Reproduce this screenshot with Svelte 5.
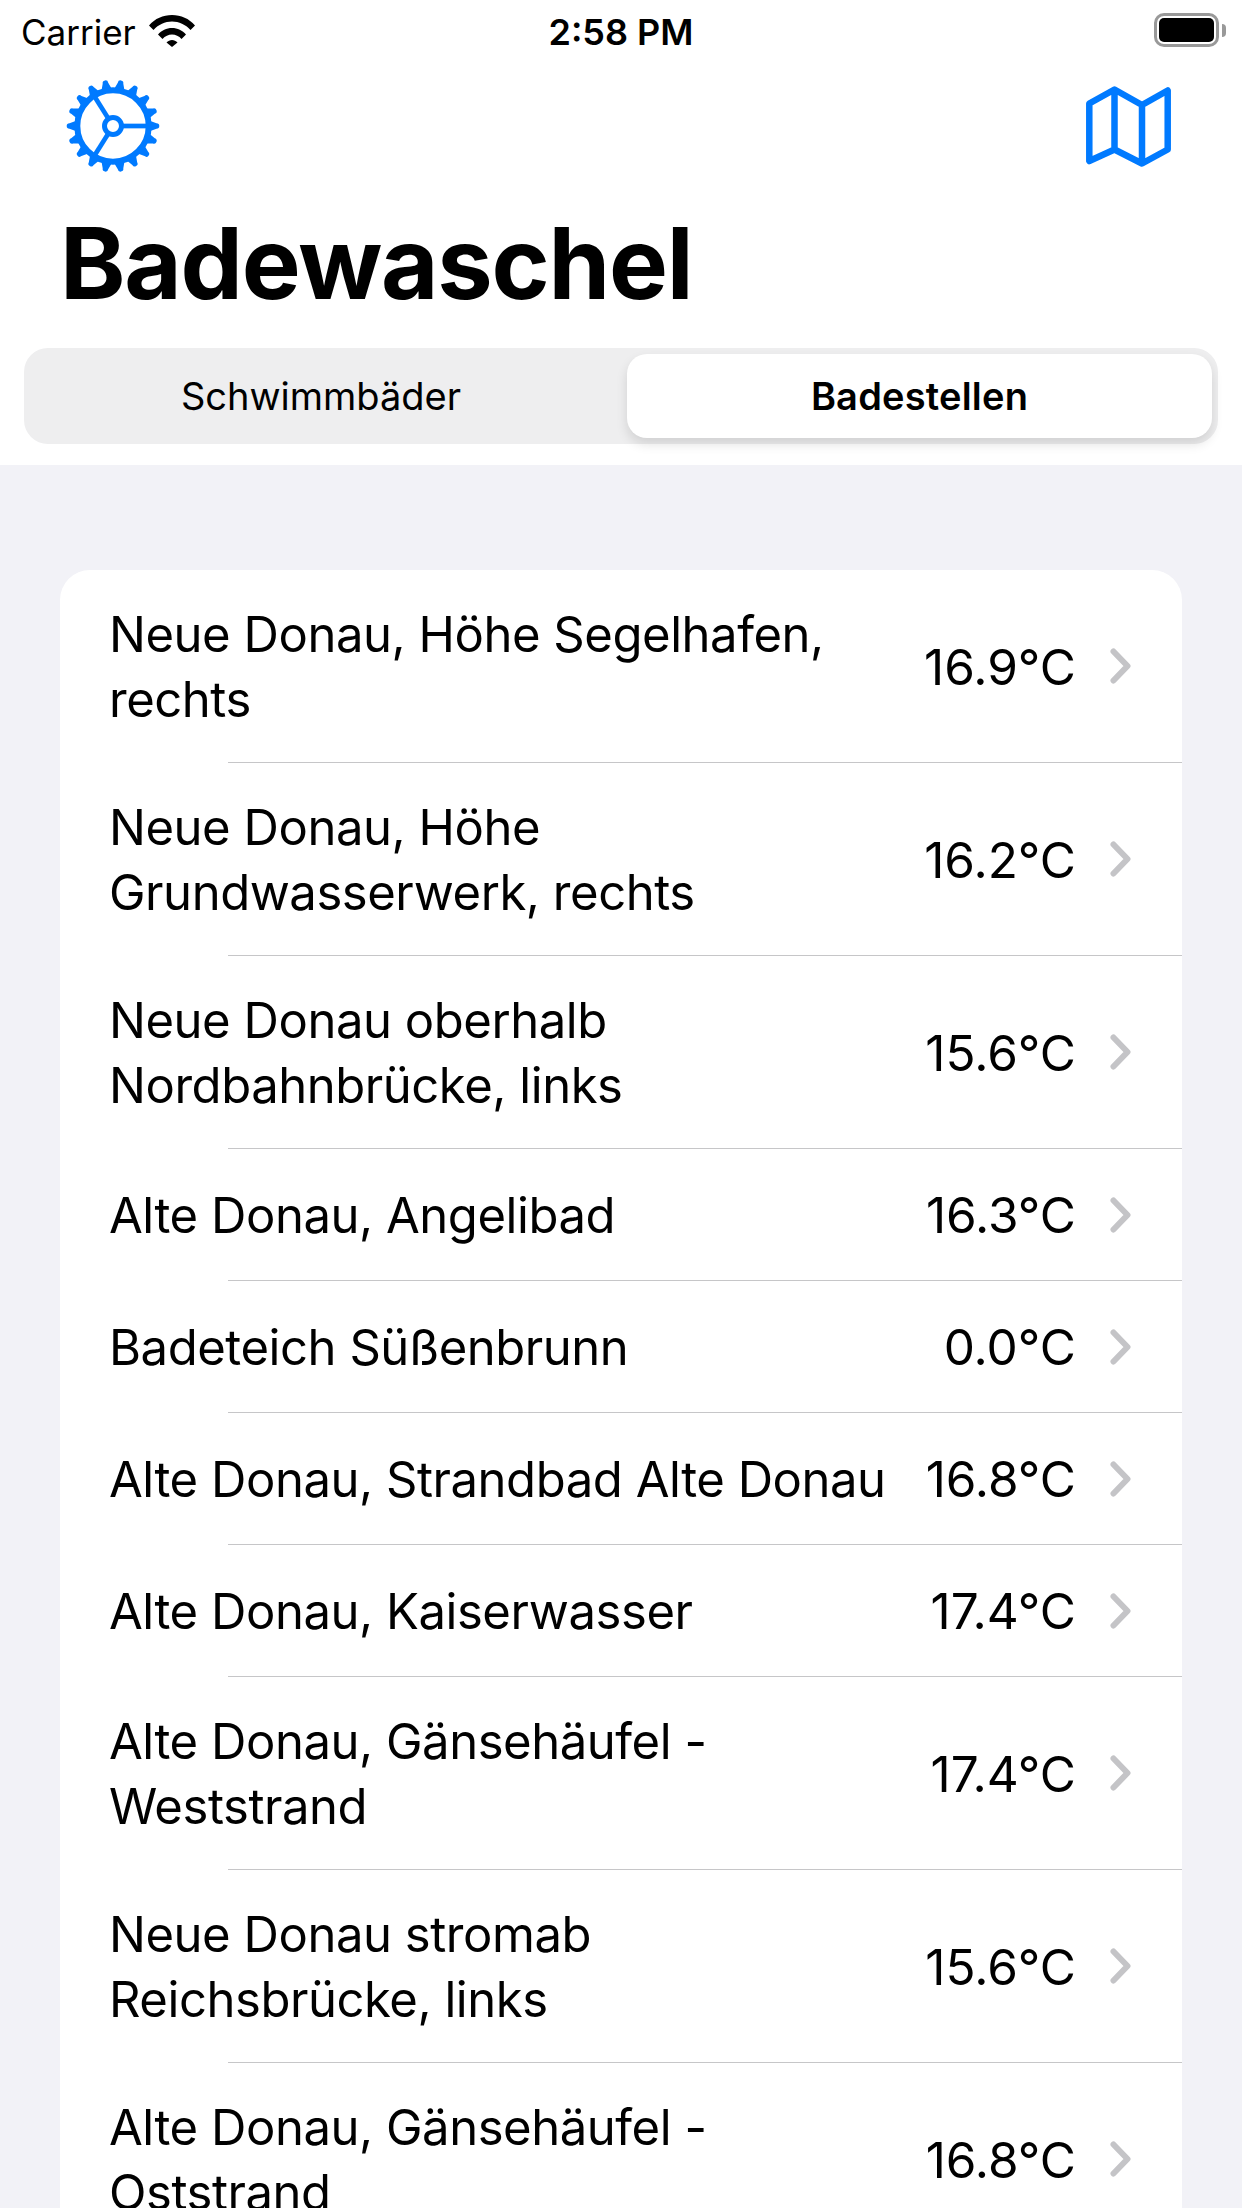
<script>
  const rows = [
    { lines: ['Neue Donau, Höhe Segelhafen,', 'rechts'], temp: '16.9°C' },
    { lines: ['Neue Donau, Höhe', 'Grundwasserwerk, rechts'], temp: '16.2°C' },
    { lines: ['Neue Donau oberhalb', 'Nordbahnbrücke, links'], temp: '15.6°C' },
    { lines: ['Alte Donau, Angelibad'], temp: '16.3°C' },
    { lines: ['Badeteich Süßenbrunn'], temp: '0.0°C' },
    { lines: ['Alte Donau, Strandbad Alte Donau'], temp: '16.8°C' },
    { lines: ['Alte Donau, Kaiserwasser'], temp: '17.4°C' },
    { lines: ['Alte Donau, Gänsehäufel -', 'Weststrand'], temp: '17.4°C' },
    { lines: ['Neue Donau stromab', 'Reichsbrücke, links'], temp: '15.6°C' },
    { lines: ['Alte Donau, Gänsehäufel -', 'Oststrand'], temp: '16.8°C' }
  ]

  // gear teeth, one every 20 degrees
  const teeth = Array.from({ length: 18 }, (_, i) => i * 20)
  const spokes = [0, 122, 238]
</script>

<div class="screen">
  <header class="top">
    <div class="status">
      <div class="status-left">
        <span class="carrier">Carrier</span>
        <svg class="wifi" width="46" height="33" viewBox="0 0 46 33">
          <path d="M0 11.5C6 4.5 14 1 23 1s17 3.500 23 10.500l-4.500 4.500C36.500 10.500 30 7.500 23 7.500S9.500 10.500 4.500 16Z" fill="#000" />
          <path d="M9 20.500C12.500 16.500 17.500 14 23 14s10.500 2.500 14 6.500l-4.500 4.500C30 22 26.500 20.500 23 20.500S16 22 13.500 25Z" fill="#000" />
          <path d="M17.500 28.500C19 27 21 26 23 26s4 1 5.500 2.500L23 33Z" fill="#000" />
        </svg>
      </div>
      <span class="time">2:58 PM</span>
      <div class="battery">
        <div class="battery-body"><div class="battery-fill"></div></div>
        <div class="battery-nub"></div>
      </div>
    </div>

    <div class="nav">
      <svg class="gear" width="94" height="94" viewBox="-47 -47 94 94">
        {#each teeth as a}
          <path d="M36 -5.500L43.500 -2.800A2.800 2.800 0 0 1 43.500 2.800L36 5.500Z" fill="#007aff" transform="rotate({a})" />
        {/each}
        <g fill="none" stroke="#007aff">
          <circle r="35.700" stroke-width="6" />
          {#each spokes as a}
            <line x1="10" y1="0" x2="36" y2="0" stroke-width="4.700" transform="rotate({a})" />
          {/each}
          <circle r="8.500" stroke-width="5" />
        </g>
      </svg>
      <svg class="map" width="85" height="81" viewBox="0 0 85 81">
        <path d="M3.300 75V17.500L28.500 3.500 56 19 81.700 4.500V63.500L56 77.500 28.500 63.500Z M28.500 3.500V63.500 M56 19V77.500" fill="none" stroke="#007aff" stroke-width="6.500" stroke-linejoin="round" />
      </svg>
    </div>

    <h1>Badewaschel</h1>

    <div class="segments">
      <div class="segment">Schwimmbäder</div>
      <div class="segment active">Badestellen</div>
    </div>
  </header>

  <main>
    <div class="card">
      {#each rows as row}
        <div class="row">
          <div class="name">
            {#each row.lines as line}
              <div>{line}</div>
            {/each}
          </div>
          <div class="temp">{row.temp}</div>
          <svg class="chevron" width="21" height="36" viewBox="0 0 21 36">
            <path d="M3.500 3.500 17.500 18 3.500 32.500" fill="none" stroke="#c4c4c7" stroke-width="6" stroke-linecap="round" stroke-linejoin="round" />
          </svg>
        </div>
      {/each}
    </div>
  </main>
</div>

<style>
  :global(body) {
    margin: 0;
    background: #f2f2f7;
  }

  .screen {
    width: 1242px;
    height: 2208px;
    overflow: hidden;
    font-family: Inter, "Liberation Sans", sans-serif;
    color: #000;
  }

  .top {
    background: #fff;
    padding-bottom: 21px;
  }

  .status {
    height: 60px;
    display: flex;
    align-items: center;
    justify-content: space-between;
    padding: 0 16px 0 21px;
    position: relative;
  }

  .status-left {
    display: flex;
    align-items: center;
    gap: 13px;
  }

  .carrier {
    font-size: 35px;
    margin-top: 3px;
  }

  .wifi {
    display: block;
  }

  .time {
    position: absolute;
    left: 0;
    right: 0;
    text-align: center;
    font-size: 36px;
    font-weight: 600;
    margin-top: 3px;
  }

  .battery {
    display: flex;
    align-items: center;
    gap: 3px;
  }

  .battery-body {
    width: 65px;
    height: 34px;
    box-sizing: border-box;
    border: 3px solid #999;
    border-radius: 10px;
    padding: 2px;
  }

  .battery-fill {
    height: 100%;
    background: #000;
    border-radius: 5px;
  }

  .battery-nub {
    width: 4px;
    height: 13px;
    background: #999;
    border-radius: 0 4px 4px 0;
  }

  .nav {
    height: 132px;
    display: flex;
    align-items: center;
    justify-content: space-between;
    padding: 0 71px 0 66px;
  }

  h1 {
    margin: 0;
    padding-left: 60px;
    height: 156px;
    line-height: 143px;
    font-size: 99px;
    font-weight: 700;
    letter-spacing: -1.2px;
  }

  .segments {
    margin: 0 24px;
    height: 96px;
    box-sizing: border-box;
    padding: 6px 6px 6px 0;
    display: grid;
    grid-template-columns: 1fr 585px;
    gap: 6px;
    background: #eeeeef;
    border-radius: 24px;
    font-size: 38px;
    line-height: 82px;
  }

  .segment {
    display: flex;
    align-items: center;
    justify-content: center;
    border-radius: 20px;
  }

  .segment:first-child {
    padding-right: 3px;
  }

  .segment.active {
    background: #fff;
    font-weight: 600;
    letter-spacing: 0.2px;
    box-shadow: 0 6px 12px rgba(0, 0, 0, 0.12);
  }

  main {
    padding: 105px 60px 0;
  }

  .card {
    background: #fff;
    border-radius: 30px 30px 0 0;
  }

  .row {
    position: relative;
    min-height: 132px;
    box-sizing: border-box;
    padding: 32px 51px 31px 49px;
    display: flex;
    align-items: center;
    font-size: 49px;
    letter-spacing: -0.45px;
    line-height: 65px;
  }

  .row::after {
    content: "";
    position: absolute;
    left: 168px;
    right: 0;
    bottom: 0;
    height: 1px;
    background: #c6c6c8;
  }

  .name {
    flex: 1;
  }

  .temp {
    white-space: nowrap;
    font-size: 49.5px;
    letter-spacing: 0;
    margin-right: 34px;
  }

  .chevron {
    display: block;
    margin-top: -2px;
  }
</style>
